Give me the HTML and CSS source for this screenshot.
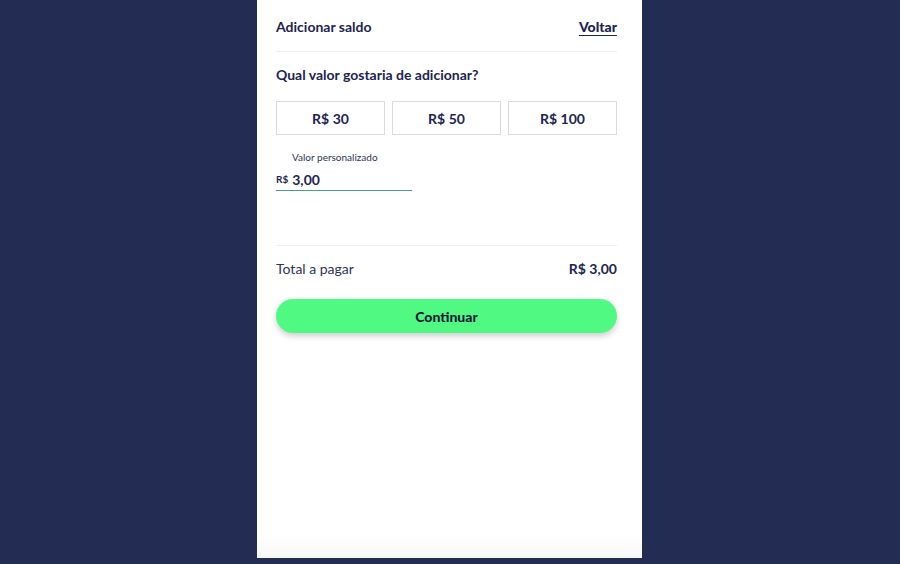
FILE: index.html
```html
<!DOCTYPE html>
<html lang="pt-BR">

<head>
    <meta charset="UTF-8">
    <meta name="viewport" content="width=device-width, initial-scale=1.0">
    <title>Adicionar saldo</title>
    <link rel="stylesheet" href="styles.css">
</head>

<body>
    <div class="panel">
        <div class="header">
            <span class="title">Adicionar saldo</span>
            <a href="#" class="back">Voltar</a>
        </div>
        <div class="content">
            <h2 class="question">Qual valor gostaria de adicionar?</h2>
            <div class="options">
                <button type="button" class="option">R$ 30</button>
                <button type="button" class="option">R$ 50</button>
                <button type="button" class="option">R$ 100</button>
            </div>
            <div class="custom">
                <label for="customValue">Valor personalizado</label>
                <div class="custom-input">
                    <span class="currency">R$</span>
                    <input type="text" id="customValue" value="3,00">
                </div>
            </div>
            <div class="total">
                <span>Total a pagar</span>
                <strong>R$ 3,00</strong>
            </div>
            <button type="button" class="btn">Continuar</button>
        </div>
    </div>
</body>

</html>
```

FILE: styles.css
```css
body {
    font-family: 'Lato', 'Noto Sans', sans-serif;
    margin: 0;
    padding: 0;
    background-color: #232d53;
    color: #1c2450;
    display: flex;
    justify-content: center;
    height: 564px;
    overflow: hidden;
}

.panel {
    width: 385px;
    height: 558px;
    margin-left: -1px;
    padding: 0 25px 0 19px;
    box-sizing: border-box;
    background-color: #fff;
    background-image: linear-gradient(to top, #f6f7f6 0, #fff 22px);
}

.header {
    display: flex;
    justify-content: space-between;
    align-items: center;
    height: 52px;
    padding-top: 1px;
    box-sizing: border-box;
    border-bottom: 1px solid #eceef0;
    font-size: 14px;
}

.header .title {
    font-weight: 700;
}

.header .back {
    color: #1c2450;
    font-weight: 900;
    text-decoration: underline;
    text-underline-offset: 3px;
}

.question {
    margin: 13px 0 0;
    font-size: 14px;
    font-weight: 700;
    line-height: 20px;
}

.options {
    display: grid;
    grid-template-columns: repeat(3, 1fr);
    gap: 7px;
    margin-top: 16px;
}

.option {
    height: 34px;
    background: #fff;
    border: 1px solid #d9dbe0;
    font-family: inherit;
    font-size: 14px;
    font-weight: 700;
    color: #1c2450;
}

.custom {
    margin-top: 15px;
    height: 95px;
    border-bottom: 1px solid #eceef0;
}

.custom label {
    display: block;
    padding-left: 16px;
    font-size: 10px;
    line-height: 14px;
    color: #2c3457;
}

.custom-input {
    display: flex;
    align-items: center;
    gap: 4px;
    width: 136px;
    height: 22px;
    margin-top: 4px;
    border-bottom: 1px solid #46a27f;
}

.currency {
    font-size: 10px;
    font-weight: 700;
}

.custom-input input {
    border: none;
    outline: none;
    padding: 0;
    width: 80px;
    font-family: inherit;
    font-size: 14px;
    font-weight: 700;
    color: #1c2450;
}

.total {
    display: flex;
    justify-content: space-between;
    align-items: center;
    height: 20px;
    margin-top: 12px;
    font-size: 14px;
}

.total span {
    color: #2c3457;
}

.total strong {
    font-weight: 700;
}

.btn {
    display: block;
    width: 100%;
    height: 34px;
    margin-top: 21px;
    border: none;
    border-radius: 17px;
    background-color: #50fa82;
    box-shadow: 0 3px 6px rgba(0, 0, 0, 0.2);
    font-family: inherit;
    font-size: 14px;
    font-weight: 900;
    color: #131a3d;
    cursor: pointer;
}
```
